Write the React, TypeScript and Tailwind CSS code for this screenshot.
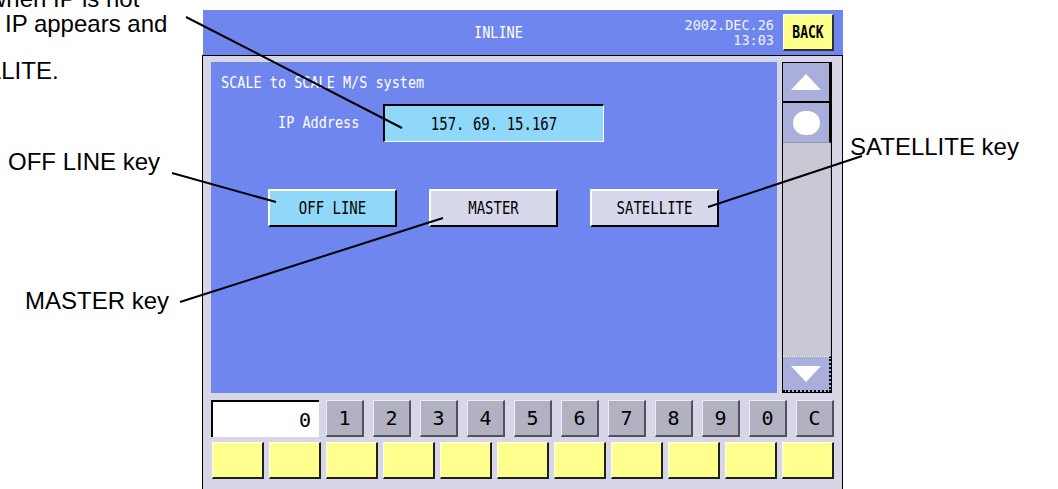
import React from "react";

const screenFont = { fontFamily: '"DejaVu Sans Mono", "Liberation Mono", monospace' };
const noteFont = { fontFamily: '"Liberation Sans", Arial, sans-serif' };

const digits = ["1", "2", "3", "4", "5", "6", "7", "8", "9", "0", "C"];

function ModeKey({ label, active }: { label: string; active?: boolean }) {
  return (
    <div
      className={`flex h-[38px] w-[129px] items-center justify-center border-t-2 border-l-2 border-r-2 border-b-2 border-t-white border-l-white border-r-black border-b-black text-[14px] leading-none text-black ${
        active ? "bg-[#90d8fa]" : "bg-[#d8d8ec]"
      }`}
    >
      <span className="inline-block scale-y-[1.2]">{label}</span>
    </div>
  );
}

function Header() {
  return (
    <div className="ml-px flex h-[45px] w-[640px] items-center bg-[#6f86ee] text-white" style={screenFont}>
      <div className="ml-[271px] scale-y-[1.15] text-[13.5px] leading-none">INLINE</div>
      <div className="flex-1 text-right text-[13.5px] leading-[15px] text-[#eef2ff]">
        <div>2002.DEC.26</div>
        <div>13:03</div>
      </div>
      <div className="ml-[9px] mr-[9px] flex h-[37px] w-[51px] items-center justify-center border-t border-l border-r-2 border-b-2 border-t-white border-l-white border-r-[#303030] border-b-[#303030] bg-[#ffff8c] text-[13px] font-bold leading-none text-black">
        <span className="inline-block scale-y-[1.3]">BACK</span>
      </div>
    </div>
  );
}

function ScrollBar() {
  return (
    <div className="flex h-[331px] w-[50px] flex-col border border-black bg-[#c9c9d6]">
      <div className="flex h-[40px] items-center justify-center border-r-2 border-b-2 border-black bg-[#a9aedb]">
        <svg width="32" height="18" viewBox="0 0 32 18">
          <polygon points="16,1 31,17 1,17" fill="white" />
        </svg>
      </div>
      <div className="flex h-[40px] items-center justify-center border-r-2 border-b border-r-black border-b-[#9898a8] bg-[#a9aedb]">
        <div className="h-[24px] w-[27px] rounded-full bg-white" />
      </div>
      <div className="flex-1 border-r border-[#b8b8c4]" />
      <div className="flex h-[36px] items-center justify-center border-t border-dotted border-t-white border-r-2 border-b-2 border-r-black border-b-black bg-[#a9aedb]">
        <svg width="32" height="18" viewBox="0 0 32 18">
          <polygon points="1,1 31,1 16,17" fill="white" />
        </svg>
      </div>
    </div>
  );
}

function Panel() {
  return (
    <div className="flex h-[331px] w-[566px] flex-col bg-[#6f86ee]" style={screenFont}>
      <div className="pl-[10px] pt-[13px] text-[13.5px] leading-[14px] text-white">
        <span className="inline-block origin-left scale-y-[1.15]">SCALE to SCALE M/S system</span>
      </div>
      <div className="mt-[15px] flex h-[38px] items-center pl-[67px]">
        <div className="w-[105px] text-[13.5px] leading-none text-white">
          <span className="inline-block scale-y-[1.15]">IP Address</span>
        </div>
        <div className="flex h-[38px] w-[221px] items-center justify-center border-t-2 border-l-2 border-r border-b border-t-black border-l-black border-r-white border-b-white bg-[#90d8fa] text-[14px] leading-none text-black">
          <span className="inline-block scale-y-[1.2]">157. 69. 15.167</span>
        </div>
      </div>
      <div className="mt-[47px] flex gap-[32px] pl-[57px]">
        <ModeKey label="OFF LINE" active />
        <ModeKey label="MASTER" />
        <ModeKey label="SATELLITE" />
      </div>
    </div>
  );
}

function Keypad() {
  return (
    <div className="mt-[7px] flex h-[37px] items-stretch" style={screenFont}>
      <div className="flex w-[108px] items-center justify-end border-t-2 border-l-2 border-black bg-white pr-[8px] text-[20px] leading-none text-black">
        0
      </div>
      <div className="ml-[7px] flex gap-[9px]">
        {digits.map((d, i) => (
          <div
            key={i}
            className="flex w-[38px] items-center justify-center border-t border-l border-r-2 border-b-2 border-t-[#ececf4] border-l-[#ececf4] border-r-[#505060] border-b-[#505060] bg-[#b1b1c1] text-[20px] leading-none text-black"
          >
            {d}
          </div>
        ))}
      </div>
    </div>
  );
}

function SoftKeys() {
  return (
    <div className="ml-px mt-[5px] flex h-[37px] gap-[5px]">
      {Array.from({ length: 11 }).map((_, i) => (
        <div
          key={i}
          className="w-[52px] border-t border-l border-r-2 border-b-2 border-t-white border-l-white border-r-[#202020] border-b-[#202020] bg-[#ffff8e]"
        />
      ))}
    </div>
  );
}

export default function App() {
  return (
    <div className="relative h-[489px] w-[1058px] overflow-hidden bg-white">
      <div className="pl-[202px] pt-[10px]">
        <Header />
        <div className="h-[440px] w-[641px] border-t border-l border-r border-black bg-[#d6d6e6] pl-[8px] pt-[6px]">
          <div className="flex gap-[5px]">
            <Panel />
            <ScrollBar />
          </div>
          <Keypad />
          <SoftKeys />
        </div>
      </div>

      {/* callout notes, cut at the page edge as in the source */}
      <div className="text-[24px] leading-[24px] text-black" style={noteFont}>
        <div className="absolute left-[-11px] top-[-13px] whitespace-nowrap">when IP is not</div>
        <div className="absolute left-[5px] top-[12px] whitespace-nowrap">IP appears and</div>
        <div className="absolute left-[-73px] top-[59px] whitespace-nowrap">SATELLITE.</div>
        <div className="absolute left-[8px] top-[150px] whitespace-nowrap">OFF LINE key</div>
        <div className="absolute left-[25px] top-[289px] whitespace-nowrap">MASTER key</div>
        <div className="absolute left-[850px] top-[135px] whitespace-nowrap">SATELLITE key</div>
      </div>
      <svg className="pointer-events-none absolute inset-0" width="1058" height="489">
        <g stroke="black" strokeWidth="2">
          <line x1="186" y1="17" x2="402" y2="128" />
          <line x1="172" y1="173" x2="276" y2="202" />
          <line x1="180" y1="302" x2="443" y2="218" />
          <line x1="862" y1="156" x2="708" y2="207" />
        </g>
      </svg>
    </div>
  );
}
